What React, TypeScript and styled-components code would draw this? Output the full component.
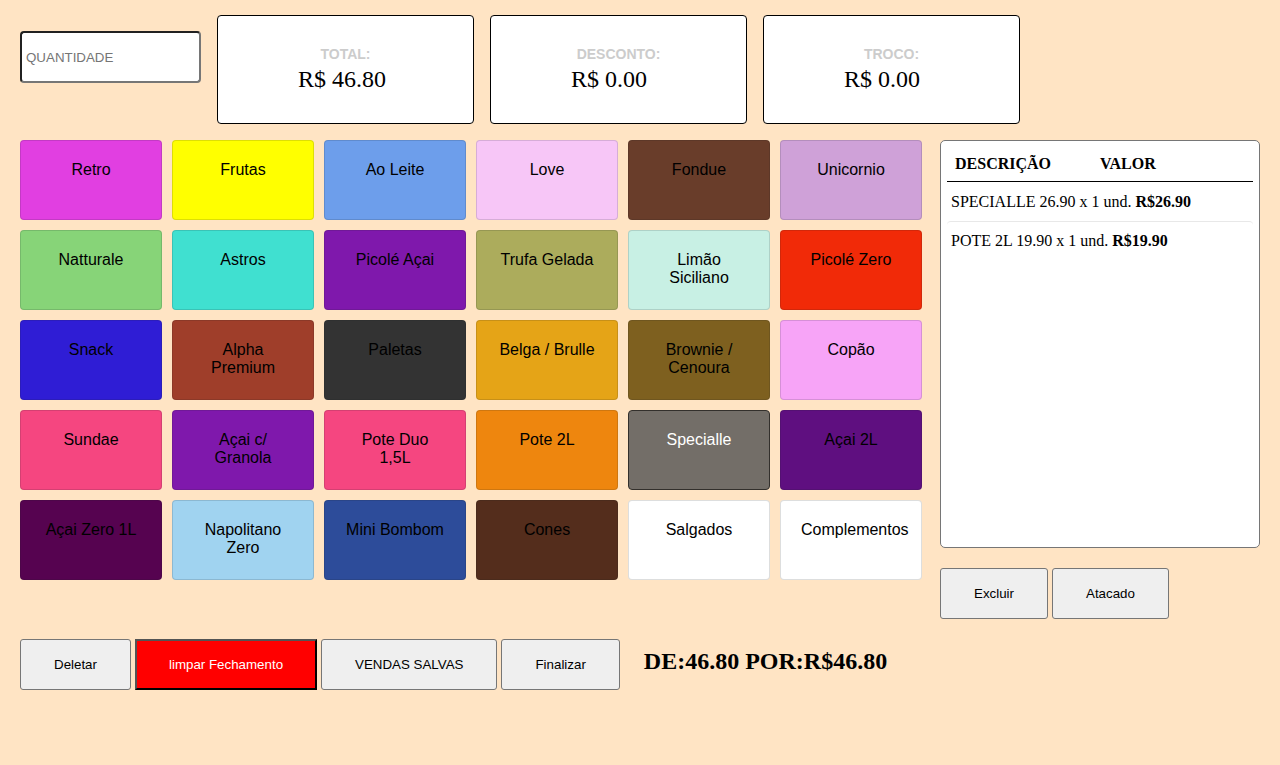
import React from "react";
import styled, { createGlobalStyle } from "styled-components";

const sans = `"Liberation Sans", Arial, sans-serif`;
const serif = `"Liberation Serif", "Times New Roman", serif`;

const GlobalStyle = createGlobalStyle`
  *, *::before, *::after { box-sizing: border-box; }
  body {
    margin: 0;
    background: #ffe4c4;
    color: #000;
    font-family: ${serif};
    font-size: 16px;
  }
`;

const Page = styled.main`
  padding: 15px 20px;
`;

const Header = styled.header`
  display: flex;
  gap: 16px;
  margin-bottom: 16px;
`;

const QuantityInput = styled.input`
  width: 181px;
  height: 52px;
  margin: 16px 0 0;
  padding: 0 4px;
  border: 2px inset #767676;
  border-radius: 4px;
  background: #fff;
  font-family: ${sans};

  &::placeholder {
    color: #757575;
  }
`;

const SummaryCard = styled.section`
  width: 257px;
  height: 109px;
  padding: 30px 80px;
  border: 1px solid #000;
  border-radius: 4px;
  background: #fff;
  white-space: nowrap;
`;

const SummaryLabel = styled.h2`
  margin: 0;
  color: #ccc;
  font: bold 14px/17px ${sans};
  text-align: center;
`;

const SummaryValue = styled.p`
  margin: 2px 0 0;
  font-size: 24px;
  line-height: 28px;
`;

const Board = styled.div`
  display: flex;
  align-items: flex-start;
  gap: 18px;
`;

const CategoryGrid = styled.nav`
  flex: 1;
  display: grid;
  grid-template-columns: repeat(6, minmax(0, 1fr));
  grid-auto-rows: 80px;
  gap: 10px;
`;

const CategoryButton = styled.button<{ $color: string; $active?: boolean }>`
  display: flex;
  align-items: flex-start;
  justify-content: flex-start;
  margin: 0;
  padding: 20px;
  border: 1px solid ${(p) => (p.$active ? "#33302c" : "rgba(27, 31, 35, 0.15)")};
  border-radius: 4px;
  background: ${(p) => p.$color};
  color: ${(p) => (p.$active ? "#fff" : "#000")};
  font: 16px/18px ${sans};
  cursor: pointer;
`;

const CategoryName = styled.span`
  flex: 1;
  text-align: center;
`;

const Sidebar = styled.aside`
  width: 320px;
`;

const Receipt = styled.section`
  min-height: 408px;
  padding: 6px;
  border: 1px solid #767676;
  border-radius: 5px;
  background: #fff;
`;

const ReceiptHead = styled.header`
  display: grid;
  grid-template-columns: 145px 1fr;
  padding: 8px 8px 8px;
  border-bottom: 1px solid #000;
  font-weight: bold;
  line-height: 18px;
`;

const ReceiptList = styled.ul`
  margin: 0;
  padding: 0;
  list-style: none;
`;

const ReceiptItem = styled.li`
  padding: 10px 4px;
  border-top: 1px solid #e8e8e8;
  border-radius: 4px;
  line-height: 18px;

  &:first-child {
    border-top-color: #fff;
  }
`;

const ButtonRow = styled.div`
  display: flex;
  gap: 4px;
  margin-top: 20px;
`;

const ActionButton = styled.button`
  height: 51px;
  margin: 0;
  padding: 0 33px;
  border: 1px solid #767676;
  border-radius: 3px;
  background: #efefef;
  color: #000;
  font-family: ${sans};
  white-space: nowrap;
  cursor: pointer;
`;

const DangerButton = styled(ActionButton)`
  padding: 0 32px;
  border: 2px outset #000;
  border-radius: 0;
  background: #f00;
  color: #fff;
`;

const Totals = styled.strong`
  margin-left: 20px;
  padding-top: 8px;
  font-size: 24px;
  line-height: 28px;
`;

const summary = [
  { label: "TOTAL:", value: "R$ 46.80" },
  { label: "DESCONTO:", value: "R$ 0.00" },
  { label: "TROCO:", value: "R$ 0.00" },
];

const categories = [
  { name: "Retro", color: "#e13fe1" },
  { name: "Frutas", color: "#ffff00" },
  { name: "Ao Leite", color: "#6d9eeb" },
  { name: "Love", color: "#f7c6f7" },
  { name: "Fondue", color: "#693d2a" },
  { name: "Unicornio", color: "#cfa1d8" },
  { name: "Natturale", color: "#87d478" },
  { name: "Astros", color: "#40e0d0" },
  { name: "Picolé Açai", color: "#7f18ac" },
  { name: "Trufa Gelada", color: "#acac5c" },
  { name: "Limão Siciliano", color: "#c8f0e4" },
  { name: "Picolé Zero", color: "#f12a08" },
  { name: "Snack", color: "#2f1dd5" },
  { name: "Alpha Premium", color: "#9f3e2a" },
  { name: "Paletas", color: "#333333" },
  { name: "Belga / Brulle", color: "#e5a417" },
  { name: "Brownie / Cenoura", color: "#7e601f" },
  { name: "Copão", color: "#f7a4f7" },
  { name: "Sundae", color: "#f54680" },
  { name: "Açai c/ Granola", color: "#7f18ac" },
  { name: "Pote Duo 1,5L", color: "#f54680" },
  { name: "Pote 2L", color: "#ee860e" },
  { name: "Specialle", color: "#736e68", active: true },
  { name: "Açai 2L", color: "#5f0f80" },
  { name: "Açai Zero 1L", color: "#560350" },
  { name: "Napolitano Zero", color: "#a0d3f0" },
  { name: "Mini Bombom", color: "#2d4c9a" },
  { name: "Cones", color: "#542d1c" },
  { name: "Salgados", color: "#ffffff" },
  { name: "Complementos", color: "#ffffff" },
];

const items = [
  { text: "SPECIALLE 26.90 x 1 und.", price: "R$26.90" },
  { text: "POTE 2L 19.90 x 1 und.", price: "R$19.90" },
];

export default function App() {
  return (
    <>
      <GlobalStyle />
      <Page>
        <Header>
          <QuantityInput placeholder="QUANTIDADE" aria-label="Quantidade" />
          {summary.map((s) => (
            <SummaryCard key={s.label}>
              <SummaryLabel>{s.label}</SummaryLabel>
              <SummaryValue>{s.value}</SummaryValue>
            </SummaryCard>
          ))}
        </Header>
        <Board>
          <CategoryGrid>
            {categories.map((c) => (
              <CategoryButton key={c.name} type="button" $color={c.color} $active={c.active}>
                <CategoryName>{c.name}</CategoryName>
              </CategoryButton>
            ))}
          </CategoryGrid>
          <Sidebar>
            <Receipt>
              <ReceiptHead>
                <span>DESCRIÇÃO</span>
                <span>VALOR</span>
              </ReceiptHead>
              <ReceiptList>
                {items.map((i) => (
                  <ReceiptItem key={i.text}>
                    {i.text} <b>{i.price}</b>
                  </ReceiptItem>
                ))}
              </ReceiptList>
            </Receipt>
            <ButtonRow>
              <ActionButton type="button">Excluir</ActionButton>
              <ActionButton type="button">Atacado</ActionButton>
            </ButtonRow>
          </Sidebar>
        </Board>
        <ButtonRow>
          <ActionButton type="button">Deletar</ActionButton>
          <DangerButton type="button">limpar Fechamento</DangerButton>
          <ActionButton type="button">VENDAS SALVAS</ActionButton>
          <ActionButton type="button">Finalizar</ActionButton>
          <Totals>DE:46.80 POR:R$46.80</Totals>
        </ButtonRow>
      </Page>
    </>
  );
}
